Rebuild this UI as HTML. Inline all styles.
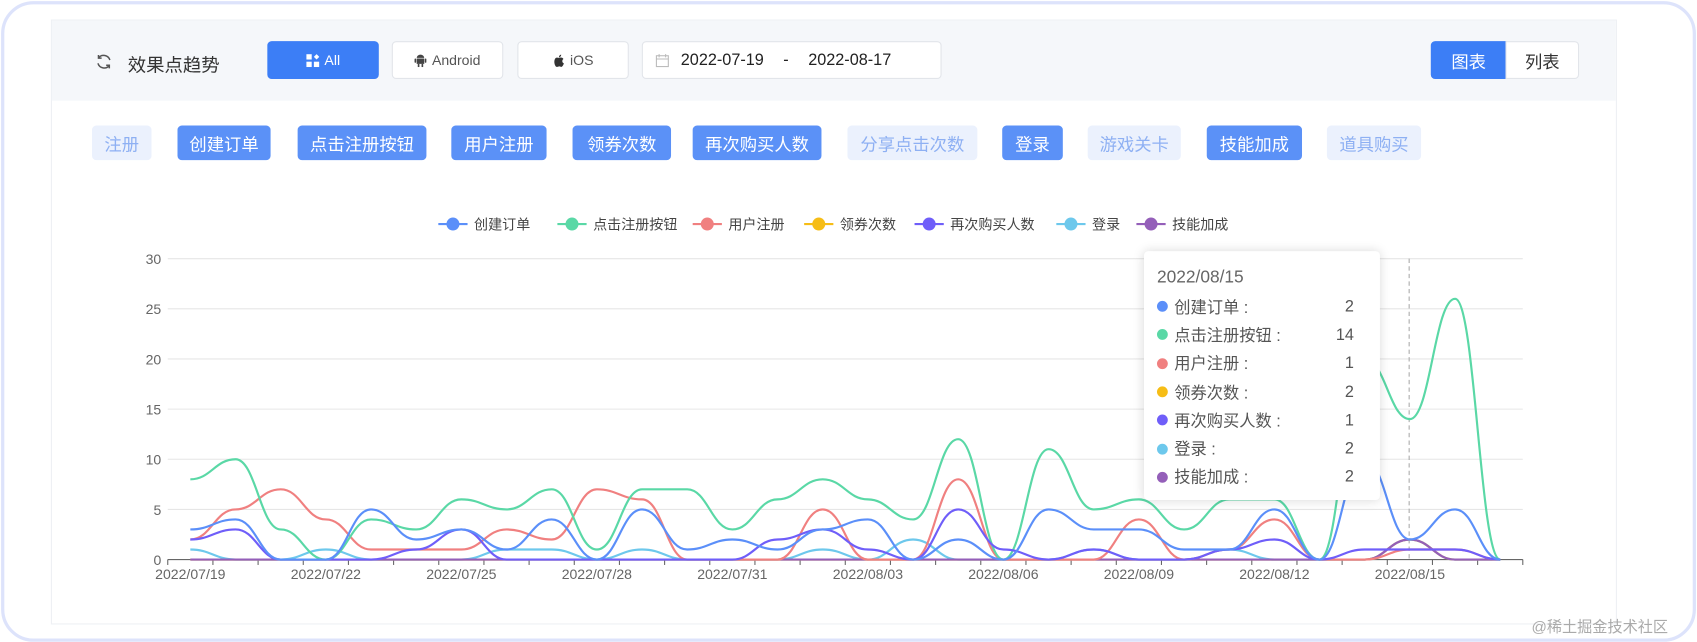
<!DOCTYPE html>
<html><head><meta charset="utf-8"><style>
html,body{margin:0;padding:0;background:#fff;width:1697px;height:642px;overflow:hidden;font-family:"Liberation Sans","Noto Sans CJK SC",sans-serif}
#w{position:absolute;left:0;top:0;width:1568px;height:593px;transform:scale(1.0823);transform-origin:0 0}
.frame{position:absolute;left:1px;top:1px;width:1560px;height:586px;border:3px solid #dde3fb;border-radius:30px;background:#fff}
.card{position:absolute;left:47px;top:18px;width:1445px;height:557px;border:1px solid #eef0f4;background:#fff}
.hdr{position:absolute;left:0;top:0;width:1445px;height:74px;background:#f5f7fa}
.a{position:absolute}
.btn{position:absolute;top:19px;height:35px;border:1px solid #e2e5ea;border-radius:4px;background:#fff;box-sizing:border-box;display:flex;align-items:center;justify-content:center;font-size:13px;color:#555}
.tag{position:absolute;top:97px;height:32px;border-radius:4px;font-size:16px;display:flex;align-items:center;justify-content:center}
.on{background:#5b91f7;color:#fff}
.off{background:#ebf1fd;color:#8eb0f3}
.tt div{height:26.3px;display:flex;align-items:center;font-size:15px;color:#555}
.tt i{width:10px;height:10px;border-radius:50%;display:inline-block;margin-right:6px}
.tt span{position:absolute;right:24px}
</style></head><body><div id="w">
<div class="frame"></div>
<div class="card">
 <div class="hdr">
  <svg class="a" style="left:40px;top:30px" width="16" height="16" viewBox="0 0 16 16" fill="none" stroke="#555" stroke-width="1.4"><path d="M13.5 6.5A6 6 0 0 0 3 4.5M2.5 9.5A6 6 0 0 0 13 11.5"/><path d="M3 1.8v2.9h2.9M13 14.2v-2.9h-2.9"/></svg>
  <div class="a" style="left:70px;top:27px;font-size:17px;color:#333">效果点趋势</div>
  <div class="btn" style="left:199px;width:103px;background:#3c7ef6;border-color:#3c7ef6;color:#fff"><svg width="12" height="12" viewBox="0 0 12 12" fill="#fff" style="margin-right:5px"><rect x="0" y="0" width="5" height="5"/><rect x="0" y="7" width="5" height="5"/><rect x="7" y="7" width="5" height="5"/><path d="M9.5 0L12 2.5 9.5 5 7 2.5z"/></svg>All</div>
  <div class="btn" style="left:314px;width:103px"><svg width="11" height="12" viewBox="0 0 11 12" fill="#444" style="margin-right:5px"><path d="M2 4h7v5H2zM2 3.5a3.5 3 0 0 1 7 0z"/><rect x="0" y="4" width="1.5" height="4" rx=".7"/><rect x="9.5" y="4" width="1.5" height="4" rx=".7"/><rect x="3" y="9" width="1.5" height="3"/><rect x="6.5" y="9" width="1.5" height="3"/></svg>Android</div>
  <div class="btn" style="left:430px;width:103px"><svg width="11" height="12" viewBox="0 0 11 12" fill="#333" style="margin-right:5px"><path d="M5.5 3.5C7 2.8 9 3 9.6 4.5 8 5.5 8.3 8 10 8.5 9.5 10 8.5 12 7.3 11.8 6.5 11.6 6 11.3 5.3 11.4 4.5 11.5 4 12 3.2 11.800 1.5 11 .3 6.5 2 4 3 3 4.5 3.2 5.5 3.5zM5.5 3C5.4 1.8 6.4.6 7.5.5 7.6 1.8 6.5 2.9 5.5 3z"/></svg>iOS</div>
  <div class="btn" style="left:545px;width:277px;justify-content:flex-start;font-size:15px;color:#222"><svg width="14" height="14" viewBox="0 0 14 14" fill="none" stroke="#bbb" style="margin:0 10px 0 11px"><rect x="1.5" y="2.5" width="11" height="10"/><path d="M1.5 5.5h11M4 1v3M10 1v3"/></svg>2022-07-19<span style="margin:0 18px">-</span>2022-08-17</div>
  <div class="btn" style="left:1274px;width:70px;background:#3c7ef6;border-color:#3c7ef6;color:#fff;font-size:16px;border-radius:4px 0 0 4px">图表</div>
  <div class="btn" style="left:1343px;width:68px;font-size:16px;color:#333;border-radius:0 4px 4px 0">列表</div>
 </div>
 <div class="tag off" style="left:37px;width:55px">注册</div>
 <div class="tag on" style="left:116px;width:86px">创建订单</div>
 <div class="tag on" style="left:227px;width:119px">点击注册按钮</div>
 <div class="tag on" style="left:369px;width:88px">用户注册</div>
 <div class="tag on" style="left:481px;width:91px">领券次数</div>
 <div class="tag on" style="left:592px;width:119px">再次购买人数</div>
 <div class="tag off" style="left:735px;width:120px">分享点击次数</div>
 <div class="tag on" style="left:878px;width:56px">登录</div>
 <div class="tag off" style="left:957px;width:86px">游戏关卡</div>
 <div class="tag on" style="left:1067px;width:88px">技能加成</div>
 <div class="tag off" style="left:1178px;width:87px">道具购买</div>
</div>
<svg id="ch" class="a" style="left:0;top:0" width="1568" height="593"></svg>
<div class="a tt" style="left:1057px;top:232px;width:218px;height:230px;background:#fff;border-radius:4px;box-shadow:0 0 10px rgba(0,0,0,.15);box-sizing:border-box;padding:14px 12px">
 <div style="font-size:16px;color:#666;height:22px;margin-bottom:2px">2022/08/15</div>
 <div><i style="background:#5b8ff9"></i>创建订单 :<span>2</span></div>
 <div><i style="background:#5ad8a6"></i>点击注册按钮 :<span>14</span></div>
 <div><i style="background:#f08080"></i>用户注册 :<span>1</span></div>
 <div><i style="background:#f6bd16"></i>领券次数 :<span>2</span></div>
 <div><i style="background:#6f5ef9"></i>再次购买人数 :<span>1</span></div>
 <div><i style="background:#6dc8ec"></i>登录 :<span>2</span></div>
 <div><i style="background:#945fb9"></i>技能加成 :<span>2</span></div>
</div>
<div class="a" style="left:1415px;top:569px;font-size:14px;color:#aaa">@稀土掘金技术社区</div>
</div>
<script>
var s=document.getElementById('ch'),h='';
var X0=155,X1=1407,Y0=517,U=(517-239)/30,W=(X1-X0)/30;
for(var v=0;v<=30;v+=5){var y=Y0-v*U;h+='<line x1="'+X0+'" x2="'+X1+'" y1="'+y+'" y2="'+y+'" stroke="#e6e6e6"/>';h+='<text x="'+(X0-6)+'" y="'+(y+5)+'" text-anchor="end" font-size="13" fill="#666" font-family="Liberation Sans">'+v+'</text>';}
h+='<line x1="'+X0+'" x2="'+X1+'" y1="'+Y0+'" y2="'+Y0+'" stroke="#666"/>';
var lab=['07/19','07/22','07/25','07/28','07/31','08/03','08/06','08/09','08/12','08/15'];
for(var i=0;i<=30;i++){var x=X0+i*W;h+='<line x1="'+x+'" x2="'+x+'" y1="'+Y0+'" y2="'+(Y0+5)+'" stroke="#666"/>';}
for(var k=0;k<10;k++){h+='<text x="'+(X0+(3*k+0.5)*W)+'" y="'+(Y0+18)+'" text-anchor="middle" font-size="13" fill="#666" font-family="Liberation Sans">2022/'+lab[k]+'</text>';}
h+='<line x1="1302" x2="1302" y1="239" y2="517" stroke="#aaa" stroke-dasharray="4,3"/>';
var S=[
['#6dc8ec',[1,0,0,1,0,0,0,1,1,0,1,0,0,0,1,0,2,0,0,0,1,0,0,1,0,0,0,2,0,0]],
['#f6bd16',[0,0,0,0,0,0,0,0,0,0,0,0,0,0,0,0,0,0,0,0,0,0,0,0,0,0,0,2,0,0]],
['#945fb9',[0,0,0,0,0,0,0,0,0,0,0,0,0,0,0,0,0,0,0,0,0,0,0,0,0,0,0,2,0,0]],
['#f08080',[2,5,7,4,1,1,1,3,2,7,6,0,0,0,5,0,0,8,0,0,0,4,0,1,4,0,0,1,1,0]],
['#5ad8a6',[8,10,3,0,4,3,6,5,7,1,7,7,3,6,8,6,4,12,0,11,5,6,3,6,6,0,20,14,26,0]],
['#6f5ef9',[2,3,0,0,0,1,3,0,0,0,0,0,0,2,3,1,0,5,1,0,1,0,0,1,2,0,1,1,1,0]],
['#5b8ff9',[3,4,0,0,5,2,3,1,4,0,5,1,2,1,3,4,0,2,0,5,3,3,1,1,5,0,10,2,5,0]]];
S.forEach(function(sr){var d=sr[1],p=d.map(function(v,i){return[X0+(i+0.5)*W,Y0-v*U]});
var str='M'+p[0][0]+' '+p[0][1];
for(var i=0;i<p.length-1;i++){var a=p[i],b=p[i+1],t=0.45*W;str+=' C'+(a[0]+t)+' '+a[1]+' '+(b[0]-t)+' '+b[1]+' '+b[0]+' '+b[1];}
h+='<path d="'+str+'" fill="none" stroke="'+sr[0]+'" stroke-width="2"/>';});
var L=[['#5b8ff9','创建订单'],['#5ad8a6','点击注册按钮'],['#f08080','用户注册'],['#f6bd16','领券次数'],['#6f5ef9','再次购买人数'],['#6dc8ec','登录'],['#945fb9','技能加成']];
var lx=[405,515,640,743,845,976,1050];
L.forEach(function(l,i){var x=lx[i];h+='<line x1="'+x+'" x2="'+(x+27)+'" y1="207" y2="207" stroke="'+l[0]+'" stroke-width="2"/><circle cx="'+(x+13.5)+'" cy="207" r="6" fill="'+l[0]+'"/><text x="'+(x+33)+'" y="212" font-size="13" fill="#444" font-family="Liberation Sans,Noto Sans CJK SC,sans-serif">'+l[1]+'</text>';});
s.innerHTML=h;
</script>
</body></html>
